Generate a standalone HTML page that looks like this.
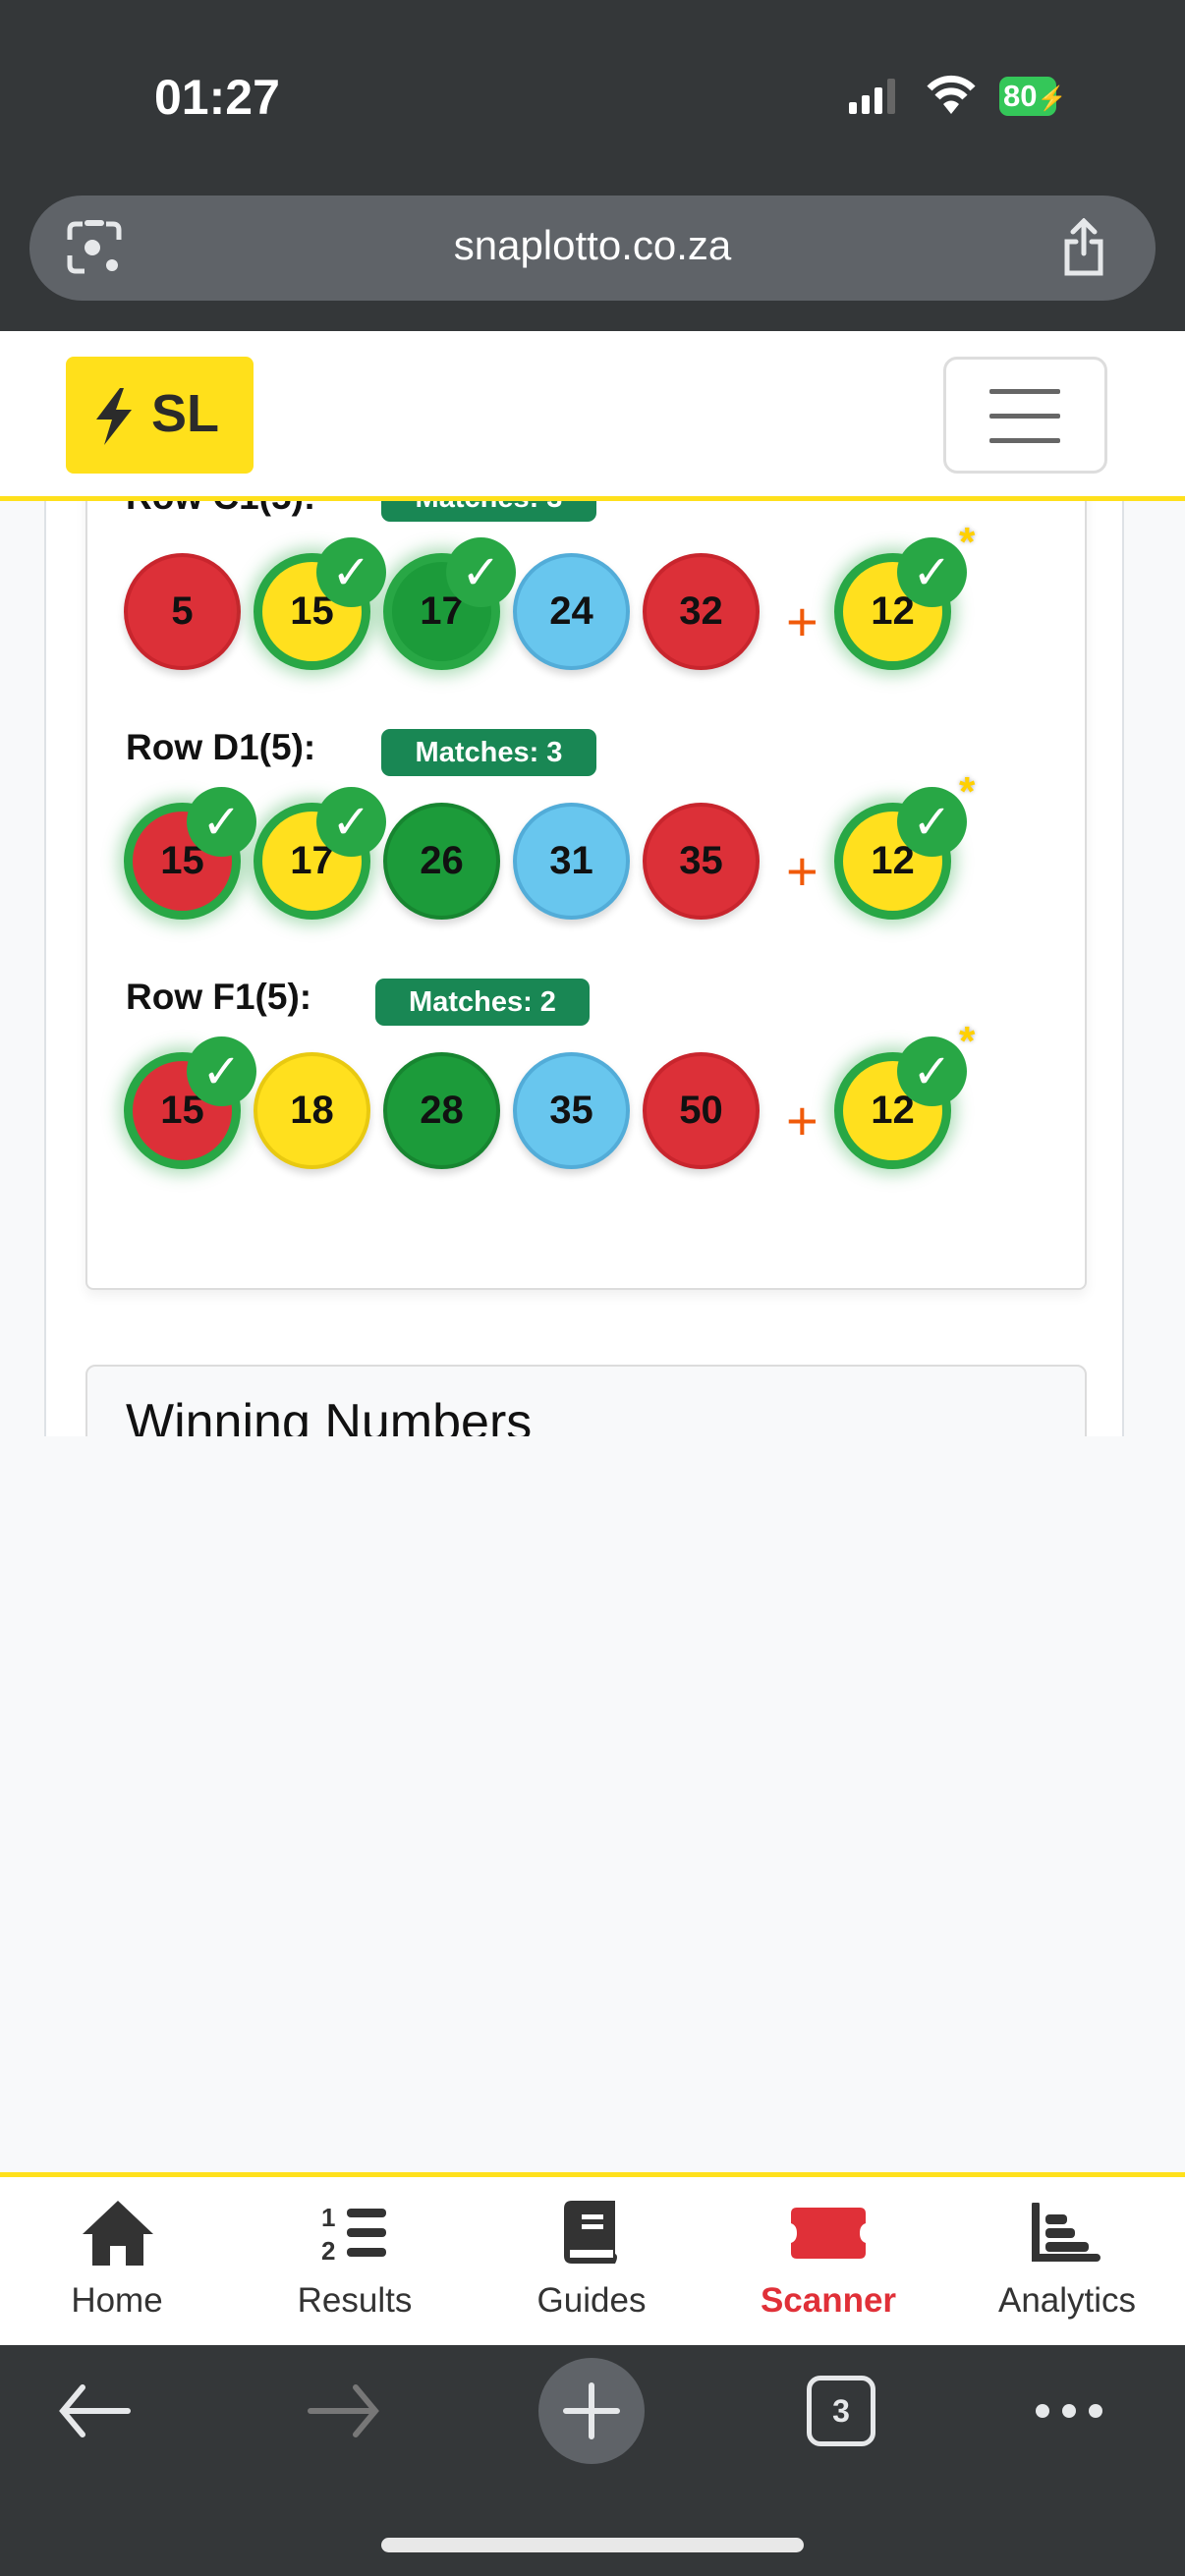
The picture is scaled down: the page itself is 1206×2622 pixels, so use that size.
<!DOCTYPE html>
<html><head><meta charset="utf-8"><style>
*{margin:0;padding:0;box-sizing:border-box}
body{width:1206px;height:2622px;position:relative;overflow:hidden;background:#f8f9fa;font-family:"Liberation Sans",sans-serif}
.abs{position:absolute}
.b{position:absolute;width:119px;height:119px;border-radius:50%;display:flex;align-items:center;justify-content:center;font-weight:bold;font-size:40px;color:#111;box-shadow:0 5px 8px rgba(0,0,0,.15)}
.r{background:#dc3038;border:4px solid #c8252d}
.y{background:#ffe01e;border:4px solid #e8c910}
.g{background:#1c9b3a;border:4px solid #178530}
.bl{background:#68c6ee;border:4px solid #52acd8}
.m{border:9px solid #28a745;box-shadow:0 0 16px 6px rgba(40,167,69,.35)}
.c{position:absolute;width:71px;height:71px;border-radius:50%;background:#28a745;color:#fff;font-size:48px;font-weight:bold;display:flex;align-items:center;justify-content:center;font-family:"DejaVu Sans",sans-serif}
.ast{position:absolute;color:#ffd000;font-size:42px;font-weight:bold;text-shadow:0 0 4px rgba(0,0,0,.3)}
.plus{position:absolute;color:#f05a0a;font-size:56px;font-weight:300}
.lbl{position:absolute;left:128px;font-size:37px;font-weight:bold;color:#111}
.badge{position:absolute;background:#198754;color:#fff;font-weight:bold;font-size:29px;border-radius:9px;height:48px;display:flex;align-items:center;justify-content:center}
.nav{position:absolute;top:2322px;font-size:35px;color:#333;transform:translateX(-50%)}
</style></head><body>

<div class="abs" style="left:45px;top:400px;width:1099px;height:1100px;background:#fff;border:2px solid #dee2e6;border-radius:10px"></div>
<div class="abs" style="left:87px;top:400px;width:1019px;height:913px;background:#fff;border:2px solid #dcdcdc;border-top:none;border-radius:0 0 8px 8px;box-shadow:0 6px 12px rgba(0,0,0,.06)"></div>
<div class="abs" style="left:87px;top:1389px;width:1019px;height:200px;background:#f8f9fa;border:2px solid #dcdcdc;border-radius:10px"></div>
<div class="abs" style="left:128px;top:1418px;font-size:52px;color:#111">Winning Numbers</div>

<div class="lbl" style="top:485px">Row C1(5):</div><div class="badge" style="left:388px;top:483px;width:219px">Matches: 3</div>
<div class="lbl" style="top:740px">Row D1(5):</div><div class="badge" style="left:388px;top:742px;width:219px">Matches: 3</div>
<div class="lbl" style="top:994px">Row F1(5):</div><div class="badge" style="left:382px;top:996px;width:218px">Matches: 2</div>

<div class="b r" style="left:126px;top:563px">5</div>
<div class="b y m" style="left:258px;top:563px">15</div>
<div class="b g m" style="left:390px;top:563px">17</div>
<div class="b bl" style="left:522px;top:563px">24</div>
<div class="b r" style="left:654px;top:563px">32</div>
<div class="plus" style="left:800px;top:600px">+</div>
<div class="b y m" style="left:849px;top:563px">12</div>
<div class="c" style="left:322px;top:547px">✓</div>
<div class="c" style="left:454px;top:547px">✓</div>
<div class="c" style="left:913px;top:547px">✓</div>
<div class="ast" style="left:976px;top:528px">*</div>

<div class="b r m" style="left:126px;top:817px">15</div>
<div class="b y m" style="left:258px;top:817px">17</div>
<div class="b g" style="left:390px;top:817px">26</div>
<div class="b bl" style="left:522px;top:817px">31</div>
<div class="b r" style="left:654px;top:817px">35</div>
<div class="plus" style="left:800px;top:854px">+</div>
<div class="b y m" style="left:849px;top:817px">12</div>
<div class="c" style="left:190px;top:801px">✓</div>
<div class="c" style="left:322px;top:801px">✓</div>
<div class="c" style="left:913px;top:801px">✓</div>
<div class="ast" style="left:976px;top:782px">*</div>

<div class="b r m" style="left:126px;top:1071px">15</div>
<div class="b y" style="left:258px;top:1071px">18</div>
<div class="b g" style="left:390px;top:1071px">28</div>
<div class="b bl" style="left:522px;top:1071px">35</div>
<div class="b r" style="left:654px;top:1071px">50</div>
<div class="plus" style="left:800px;top:1108px">+</div>
<div class="b y m" style="left:849px;top:1071px">12</div>
<div class="c" style="left:190px;top:1055px">✓</div>
<div class="c" style="left:913px;top:1055px">✓</div>
<div class="ast" style="left:976px;top:1036px">*</div>

<div class="abs" style="left:0;top:1462px;width:1206px;height:760px;background:#f8f9fa"></div>

<div class="abs" style="left:0;top:0;width:1206px;height:337px;background:#343739"></div>
<div class="abs" style="left:157px;top:70px;font-size:50px;font-weight:bold;color:#fff">01:27</div>
<svg class="abs" style="left:864px;top:78px" width="60" height="40"><rect x="0" y="26" width="8" height="12" rx="2" fill="#fff"/><rect x="13" y="19" width="8" height="19" rx="2" fill="#fff"/><rect x="26" y="11" width="8" height="27" rx="2" fill="#fff"/><rect x="39" y="2" width="8" height="36" rx="2" fill="#666"/></svg>
<svg class="abs" style="left:942px;top:74px" width="52" height="44"><path d="M4 16 A30 30 0 0 1 48 16" stroke="#fff" stroke-width="7" fill="none"/><path d="M12 25 A19 19 0 0 1 40 25" stroke="#fff" stroke-width="7" fill="none"/><path d="M26 42 L18 32 A11 11 0 0 1 34 32 Z" fill="#fff"/></svg>
<div class="abs" style="left:1017px;top:78px;width:58px;height:40px;border-radius:9px;background:#34c759;color:#fff;font-weight:bold;font-size:31px;line-height:40px;padding-left:4px">80<span style="font-size:24px">⚡</span></div>
<div class="abs" style="left:30px;top:199px;width:1146px;height:107px;border-radius:54px;background:#5f6368"></div>
<div class="abs" style="left:0;top:226px;width:1206px;text-align:center;font-size:42px;color:#fff">snaplotto.co.za</div>
<svg class="abs" style="left:66px;top:222px" width="60" height="60"><path d="M5 22 V12 Q5 6 11 6 H18 M42 6 H49 Q55 6 55 12 V22 M5 38 V48 Q5 54 11 54 H20" stroke="#e6e8ea" stroke-width="5" fill="none"/><circle cx="28" cy="30" r="8" fill="#e6e8ea"/><circle cx="48" cy="48" r="6" fill="#e6e8ea"/><rect x="20" y="2" width="20" height="6" rx="3" fill="#e6e8ea"/></svg>
<svg class="abs" style="left:1078px;top:222px" width="50" height="62"><path d="M25 4 V36 M14 14 L25 3 L36 14 M17 24 H8 V56 H42 V24 H33" stroke="#e6e8ea" stroke-width="5" fill="none" stroke-linecap="round"/></svg>

<div class="abs" style="left:0;top:337px;width:1206px;height:173px;background:#fff;border-bottom:5px solid #ffe01b"></div>
<div class="abs" style="left:67px;top:363px;width:191px;height:119px;background:#ffe01b;border-radius:8px"></div>
<svg class="abs" style="left:92px;top:393px" width="48" height="62"><path d="M30 2 L6 34 H22 L14 60 L42 24 H26 L34 2 Z" fill="#2b2b2b"/></svg>
<div class="abs" style="left:154px;top:390px;font-size:54px;font-weight:bold;color:#2b2b2b">SL</div>
<div class="abs" style="left:960px;top:363px;width:167px;height:119px;border:3px solid #ddd;border-radius:14px;background:#fff"></div>
<div class="abs" style="left:1007px;top:396px;width:72px;height:5px;background:#666;border-radius:2px"></div>
<div class="abs" style="left:1007px;top:421px;width:72px;height:5px;background:#666;border-radius:2px"></div>
<div class="abs" style="left:1007px;top:446px;width:72px;height:5px;background:#666;border-radius:2px"></div>

<div class="abs" style="left:0;top:2211px;width:1206px;height:176px;background:#fff;border-top:5px solid #ffe01b"></div>
<svg class="abs" style="left:82px;top:2238px" width="76" height="70"><path d="M38 2 L2 36 H12 V68 H30 V48 H46 V68 H64 V36 H74 Z" fill="#333"/></svg>
<svg class="abs" style="left:327px;top:2242px" width="70" height="62"><text x="0" y="24" font-size="26" font-weight="bold" fill="#333" font-family="Liberation Sans">1</text><text x="0" y="58" font-size="26" font-weight="bold" fill="#333" font-family="Liberation Sans">2</text><rect x="26" y="6" width="40" height="9" rx="4" fill="#333"/><rect x="26" y="26" width="40" height="9" rx="4" fill="#333"/><rect x="26" y="46" width="40" height="9" rx="4" fill="#333"/></svg>
<svg class="abs" style="left:572px;top:2238px" width="60" height="70"><path d="M10 2 H54 V56 Q58 58 54 66 H10 Q2 66 2 58 V10 Q2 2 10 2 Z" fill="#333"/><rect x="8" y="52" width="44" height="8" fill="#fff"/><rect x="20" y="16" width="22" height="5" fill="#fff"/><rect x="20" y="26" width="22" height="5" fill="#fff"/></svg>
<svg class="abs" style="left:805px;top:2247px" width="76" height="52"><path d="M6 0 H70 Q76 0 76 6 V16 Q70 18 70 26 Q70 34 76 36 V46 Q76 52 70 52 H6 Q0 52 0 46 V36 Q6 34 6 26 Q6 18 0 16 V6 Q0 0 6 0 Z" fill="#e03038"/></svg>
<svg class="abs" style="left:1050px;top:2242px" width="72" height="64"><path d="M4 2 V56 H66" stroke="#333" stroke-width="8" fill="none" stroke-linecap="round"/><rect x="14" y="12" width="22" height="10" rx="4" fill="#333"/><rect x="14" y="26" width="30" height="10" rx="4" fill="#333"/><rect x="14" y="40" width="44" height="10" rx="4" fill="#333"/></svg>
<div class="nav" style="left:119px">Home</div>
<div class="nav" style="left:361px">Results</div>
<div class="nav" style="left:602px">Guides</div>
<div class="nav" style="left:843px;color:#e03038;font-weight:bold">Scanner</div>
<div class="nav" style="left:1086px">Analytics</div>

<div class="abs" style="left:0;top:2387px;width:1206px;height:235px;background:#343739"></div>
<svg class="abs" style="left:58px;top:2424px" width="76" height="60"><path d="M72 30 H8 M26 6 L6 30 L26 54" stroke="#e6e8ea" stroke-width="6" fill="none" stroke-linecap="round"/></svg>
<svg class="abs" style="left:312px;top:2424px" width="76" height="60"><path d="M4 30 H68 M50 6 L70 30 L50 54" stroke="#777" stroke-width="6" fill="none" stroke-linecap="round"/></svg>
<div class="abs" style="left:548px;top:2400px;width:108px;height:108px;border-radius:50%;background:#5f6368"></div>
<svg class="abs" style="left:572px;top:2424px" width="60" height="60"><path d="M30 4 V56 M4 30 H56" stroke="#e6e8ea" stroke-width="6" stroke-linecap="round"/></svg>
<div class="abs" style="left:821px;top:2418px;width:70px;height:72px;border:5px solid #e6e8ea;border-radius:14px;color:#e6e8ea;font-size:32px;font-weight:bold;text-align:center;line-height:62px">3</div>
<div class="abs" style="left:1054px;top:2447px;width:14px;height:14px;border-radius:50%;background:#e6e8ea"></div>
<div class="abs" style="left:1081px;top:2447px;width:14px;height:14px;border-radius:50%;background:#e6e8ea"></div>
<div class="abs" style="left:1108px;top:2447px;width:14px;height:14px;border-radius:50%;background:#e6e8ea"></div>
<div class="abs" style="left:388px;top:2583px;width:430px;height:15px;border-radius:8px;background:#e8e8e8"></div>
</body></html>
